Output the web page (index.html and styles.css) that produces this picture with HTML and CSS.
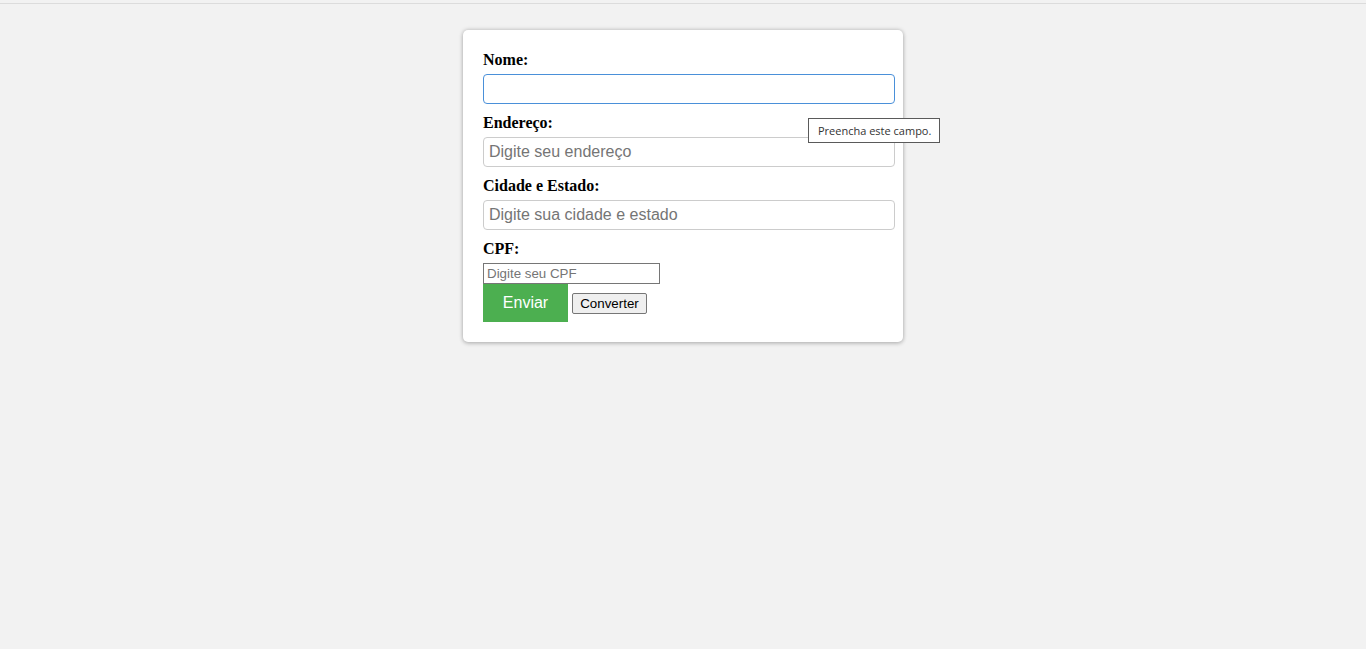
FILE: index.html
```html
<!DOCTYPE html>
<html lang="pt-BR">
<head>
<meta charset="utf-8">
<title>Formulário</title>
<link rel="stylesheet" href="styles.css">
</head>
<body>
<div class="topline"></div>
<div class="card">
  <form class="form">
    <label class="label" for="nome">Nome:</label>
    <div class="field-wrap">
      <input class="field field-focus" id="nome" type="text">
      <div class="tooltip">Preencha este campo.</div>
    </div>
    <label class="label" for="endereco">Endereço:</label>
    <input class="field" id="endereco" type="text" placeholder="Digite seu endereço">
    <label class="label" for="cidade">Cidade e Estado:</label>
    <input class="field" id="cidade" type="text" placeholder="Digite sua cidade e estado">
    <label class="label" for="cpf">CPF:</label>
    <input class="cpf" id="cpf" type="text" placeholder="Digite seu CPF">
    <div class="actions">
      <button class="btn-send" type="button">Enviar</button>
      <button class="btn-convert" type="button">Converter</button>
    </div>
  </form>
</div>
</body>
</html>
```
FILE: styles.css
```css
html, body {
  margin: 0;
  padding: 0;
}
body {
  background: #f2f2f2;
  font-family: "Liberation Serif", "Times New Roman", serif;
  min-height: 649px;
}
.topline {
  height: 3px;
  border-bottom: 1px solid #dcdcdc;
  background: #f2f2f2;
}
.card {
  width: 400px;
  margin: 26px auto 0;
  padding: 21px 20px 20px;
  background: #fff;
  border-radius: 5px;
  box-shadow: 0 0 4px rgba(0, 0, 0, 0.25), 0 2px 4px rgba(0, 0, 0, 0.12);
}
.form {
  display: block;
}
.label {
  display: block;
  font-weight: bold;
  font-size: 16px;
  line-height: 18px;
  margin-bottom: 5px;
  color: #000;
}
.field-wrap {
  position: relative;
}
.field {
  display: block;
  width: 400px;
  height: 18px;
  padding: 5px;
  margin: 0 0 10px;
  border: 1px solid #cccccc;
  border-radius: 4px;
  font-family: "Liberation Sans", Arial, sans-serif;
  font-size: 16px;
  line-height: 18px;
  color: #000;
  background: #fff;
  outline: none;
}
.field::placeholder {
  color: #757575;
}
.field-focus {
  border-color: #4a90d9;
}
.tooltip {
  position: absolute;
  left: 325px;
  top: 44px;
  padding: 0 8px 0 9px;
  height: 23px;
  line-height: 23px;
  background: #fff;
  border: 1px solid #5a5a5a;
  font-family: "Open Sans", "Noto Sans", sans-serif;
  font-size: 11px;
  color: #333;
  white-space: nowrap;
  z-index: 2;
}
.cpf {
  display: block;
  box-sizing: border-box;
  width: 177px;
  height: 21px;
  margin: 0;
  padding: 1px 3px;
  border: 1px solid #767676;
  border-radius: 0;
  font-family: "Liberation Sans", Arial, sans-serif;
  font-size: 13.33px;
  background: #fff;
}
.cpf::placeholder {
  color: #757575;
}
.actions {
  display: flex;
  align-items: center;
  gap: 4px;
}
.btn-send {
  width: 85px;
  height: 38px;
  padding: 0;
  border: none;
  background: #4caf50;
  color: #fff;
  font-family: "Liberation Sans", Arial, sans-serif;
  font-size: 16px;
}
.btn-convert {
  box-sizing: border-box;
  width: 75px;
  height: 21px;
  padding: 0 6px;
  border: 1px solid #767676;
  border-radius: 2px;
  background: #efefef;
  color: #000;
  font-family: "Liberation Sans", Arial, sans-serif;
  font-size: 13.33px;
}
```
